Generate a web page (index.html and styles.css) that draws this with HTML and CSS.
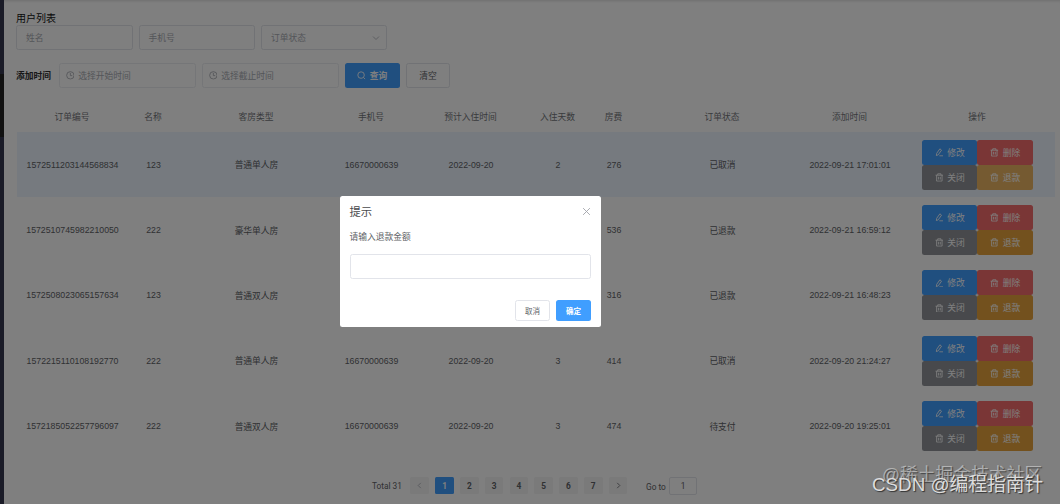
FILE: index.html
```
<!DOCTYPE html>
<html lang="zh-CN">
<head>
  <meta charset="UTF-8">
  <meta name="viewport" content="width=device-width, initial-scale=1.0">
  <title>用户列表</title>
  <link rel="stylesheet" href="styles.css">
</head>
<body>
  <svg class="sprite" width="0" height="0">
    <symbol id="i-edit" viewBox="0 0 16 16"><path d="M3 10 9 1.500l3 2.500L6 12.500 2.500 14zM8 14.500h7"/></symbol>
    <symbol id="i-trash" viewBox="0 0 16 16"><path d="M1 4h14M5 4V1.500h6V4M3 4v11h10V4M6.300 7v5M9.700 7v5"/></symbol>
    <symbol id="i-search" viewBox="0 0 16 16"><circle cx="7.500" cy="7.500" r="6"/><path d="m12 12 3 3"/></symbol>
    <symbol id="i-clock" viewBox="0 0 16 16"><circle cx="8" cy="8" r="6.800"/><path d="M8 3.500V8.500h3.500"/></symbol>
  </svg>

  <div class="app">
    <aside class="sidebar"><div class="sidebar-item"></div></aside>
    <main class="content">
      <div class="title">用户列表</div>
      <div class="filters">
        <div class="input name">姓名</div>
        <div class="input phone">手机号</div>
        <div class="input status">订单状态
          <svg class="arrow" viewBox="0 0 16 16"><path d="m2 5 6 6 6-6"/></svg>
        </div>
      </div>
      <div class="filters time">
        <span class="label">添加时间</span>
        <div class="input date"><svg class="icon"><use href="#i-clock"/></svg>选择开始时间</div>
        <div class="input date"><svg class="icon"><use href="#i-clock"/></svg>选择截止时间</div>
        <button class="btn primary search"><svg class="icon"><use href="#i-search"/></svg>查询</button>
        <button class="btn plain">清空</button>
      </div>

      <table class="table">
        <colgroup>
          <col class="c-id"><col class="c-name"><col class="c-type"><col class="c-phone"><col class="c-date">
          <col class="c-days"><col class="c-fee"><col class="c-status"><col class="c-time"><col class="c-op">
        </colgroup>
        <thead>
          <tr><th>订单编号</th><th>名称</th><th>客房类型</th><th>手机号</th><th>预计入住时间</th><th>入住天数</th><th>房费</th><th>订单状态</th><th>添加时间</th><th>操作</th></tr>
        </thead>
        <tbody id="rows"></tbody>
      </table>

      <div class="pagination">
        <span class="total">Total 31</span>
        <span class="page disabled"><svg class="chev" viewBox="0 0 16 16"><path d="M11 2 5 8l6 6"/></svg></span>
        <span class="page active">1</span>
        <span class="page">2</span>
        <span class="page">3</span>
        <span class="page">4</span>
        <span class="page">5</span>
        <span class="page">6</span>
        <span class="page">7</span>
        <span class="page"><svg class="chev" viewBox="0 0 16 16"><path d="m5 2 6 6-6 6"/></svg></span>
        <span class="jump">Go to</span>
        <span class="jump-input">1</span>
      </div>
    </main>
  </div>

  <div class="overlay">
    <div class="dialog">
      <div class="dialog-header">
        <span>提示</span>
        <svg class="close" viewBox="0 0 16 16"><path d="m2 2 12 12M14 2 2 14"/></svg>
      </div>
      <div class="dialog-message">请输入退款金额</div>
      <input class="dialog-input" type="text">
      <div class="dialog-footer">
        <button class="btn small plain">取消</button>
        <button class="btn small primary">确定</button>
      </div>
    </div>
  </div>

  <div class="watermark juejin">@稀土掘金技术社区</div>
  <div class="watermark csdn">CSDN @编程指南针</div>

  <script>
    const orders = [
      ['1572511203144568834', '123', '普通单人房', '16670000639', '2022-09-20', '2', '276', '已取消', '2022-09-21 17:01:01'],
      ['1572510745982210050', '222', '豪华单人房', '16670000639', '2022-09-20', '3', '536', '已退款', '2022-09-21 16:59:12'],
      ['1572508023065157634', '123', '普通双人房', '16670000639', '2022-09-20', '2', '316', '已退款', '2022-09-21 16:48:23'],
      ['1572215110108192770', '222', '普通单人房', '16670000639', '2022-09-20', '3', '414', '已取消', '2022-09-20 21:24:27'],
      ['1572185052257796097', '222', '普通双人房', '16670000639', '2022-09-20', '3', '474', '待支付', '2022-09-20 19:25:01']
    ];
    const actions = [['primary', 'edit', '修改'], ['danger', 'trash', '删除'], ['info', 'trash', '关闭'], ['warning', 'trash', '退款']];
    const buttons = actions.map(([type, icon, text]) =>
      `<button class="btn ${type}"><svg class="icon"><use href="#i-${icon}"/></svg>${text}</button>`).join('');

    document.getElementById('rows').innerHTML = orders.map((order, i) =>
      `<tr class="${i === 0 ? 'current' : ''}">${order.map(v => `<td>${v}</td>`).join('')}<td><div class="ops">${buttons}</div></td></tr>`
    ).join('');
  </script>
</body>
</html>
```

FILE: styles.css
```
* {
  box-sizing: border-box;
}

body {
  margin: 0;
  height: 504px;
  overflow: hidden;
  font-family: "Liberation Sans", "Noto Sans CJK SC", sans-serif;
  font-size: 8.75px;
  color: #606266;
  background: #fff;
}

svg {
  fill: none;
  stroke: currentColor;
  stroke-width: 1.6;
}

.sprite {
  position: absolute;
}

.app {
  display: flex;
  height: 504px;
}

.sidebar {
  width: 4px;
  flex: none;
  padding-top: 74px;
  background: #34364f;
}

.sidebar-item {
  height: 63px;
  background: #222;
}

.content {
  flex: 1;
  padding: 12px 5px 0 12px;
  box-shadow: inset 0 3px 3px -2px #ddd;
}

.title {
  height: 13px;
  line-height: 14px;
  font-size: 10px;
  color: #111;
}

.filters {
  display: flex;
  align-items: center;
  gap: 6px;
  height: 25px;
}

.filters.time {
  margin-top: 13px;
}

.input {
  display: flex;
  align-items: center;
  height: 25px;
  padding: 0 9px;
  border: 1px solid #e2e4ea;
  border-radius: 2.5px;
  color: #a8abb2;
}

.name,
.phone {
  width: 116.5px;
}

.status {
  width: 126px;
  justify-content: space-between;
  padding-right: 6px;
}

.arrow {
  width: 8px;
  height: 8px;
}

.label {
  width: 36.5px;
  color: #303133;
  font-weight: bold;
  white-space: nowrap;
}

.date {
  width: 137px;
  padding: 0 6px;
  border-color: #ebecf0;
}

.icon {
  width: 8.7px;
  height: 8.7px;
  margin-right: 4px;
  flex: none;
}

.btn {
  display: inline-flex;
  align-items: center;
  justify-content: center;
  width: 55.4px;
  height: 25px;
  padding: 0;
  border: 0;
  border-radius: 2.5px;
  font: inherit;
  color: #fff;
}

.btn.primary {
  background: #409eff;
}

.btn.danger {
  background: #f56c6c;
}

.btn.info {
  background: #909399;
}

.btn.warning {
  background: #e6a23c;
}

.current .warning {
  background: #ebb563;
}

.btn.plain {
  width: 44px;
  border: 1px solid #e2e4ea;
  background: #fff;
  color: #606266;
}

.btn.search {
  font-weight: bold;
}

.table {
  width: 1038px;
  margin: 14px 0 0 0.5px;
  table-layout: fixed;
  border-collapse: collapse;
  text-align: center;
}

.table th {
  height: 29.5px;
  padding: 0;
  font-weight: normal;
  color: #73767a;
}

.table td {
  height: 65.35px;
  padding: 1px 0 0 1px;
}

.table .current {
  background: #ecf5ff;
}

.c-id { width: 111px; }
.c-name { width: 51px; }
.c-type { width: 155px; }
.c-phone { width: 75px; }
.c-date { width: 124px; }
.c-days { width: 50px; }
.c-fee { width: 62px; }
.c-status { width: 155px; }
.c-time { width: 100px; }
.c-op { width: 155px; }

.ops {
  display: flex;
  flex-wrap: wrap;
  width: 111px;
  margin: 0 auto;
}

.pagination {
  display: flex;
  align-items: center;
  gap: 6.2px;
  height: 18px;
  margin: 18.5px 0 0 356px;
  font-family: Roboto, sans-serif;
  font-size: 8.3px;
}

.total {
  width: 32.3px;
  white-space: nowrap;
}

.page {
  display: flex;
  align-items: center;
  justify-content: center;
  width: 18.6px;
  height: 17.5px;
  border-radius: 1.5px;
  background: #f4f4f5;
  font-weight: bold;
}

.page.active {
  background: #409eff;
  color: #fff;
}

.page.disabled {
  color: #a8abb2;
}

.chev {
  width: 7px;
  height: 7px;
  stroke-width: 1.8;
}

.jump {
  width: 20.5px;
  margin: 2px 0 0 12.5px;
  white-space: nowrap;
}

.jump-input {
  width: 28px;
  height: 18px;
  margin: 1px 0 0 -3.5px;
  border: 1px solid #e2e4ea;
  border-radius: 2px;
  line-height: 17px;
  text-align: center;
}

.overlay {
  position: absolute;
  inset: 0;
  background: rgba(0, 0, 0, 0.5);
}

.dialog {
  position: absolute;
  top: 196px;
  left: 340px;
  width: 261px;
  height: 131px;
  padding: 8.5px 10px 7px 9.5px;
  border-radius: 2.5px;
  background: #fff;
}

.dialog-header {
  display: flex;
  align-items: center;
  justify-content: space-between;
  height: 13px;
  font-size: 11.3px;
  color: #48494c;
}

.close {
  width: 9px;
  height: 9px;
  color: #a0a3a9;
}

.dialog-message {
  height: 14px;
  margin-top: 12.5px;
  line-height: 14px;
}

.dialog-input {
  display: block;
  width: 241.5px;
  height: 25px;
  margin-top: 10px;
  border: 1px solid #e2e4ea;
  border-radius: 2.5px;
}

.dialog-footer {
  display: flex;
  justify-content: flex-end;
  gap: 6px;
  margin-top: 21px;
}

.btn.small {
  width: 35px;
  height: 21px;
  font-size: 7.5px;
}

.btn.small.primary {
  font-weight: bold;
}

.watermark {
  position: absolute;
  white-space: nowrap;
  line-height: 24px;
}

.juejin {
  top: 463px;
  left: 882px;
  font-size: 17.8px;
  color: rgba(255, 255, 255, 0.45);
  text-shadow: 1px 1px 1px #444;
}

.csdn {
  top: 473px;
  left: 872px;
  font-size: 18.8px;
  color: #ddd;
  text-shadow: 1px 1px 1px #333;
}
```
